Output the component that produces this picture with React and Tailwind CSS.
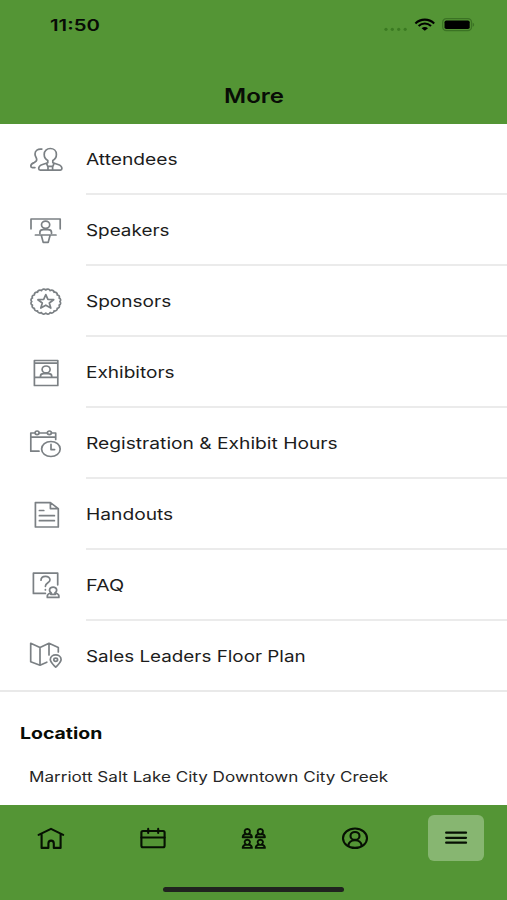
function Icon({ children }) {
  return (
    <svg
      width="40"
      height="36"
      viewBox="0 0 40 36"
      fill="none"
      stroke="#7b8084"
      strokeWidth="1.7"
      strokeLinecap="round"
      strokeLinejoin="round"
      className="mt-px shrink-0"
      aria-hidden="true"
    >
      {children}
    </svg>
  )
}

function AttendeesIcon() {
  return (
    <Icon>
      <path d="M21.8 18.4c-2.1-1.1-3.6-3.4-3.6-6 0-3.6 2.700-5.900 6.100-5.900s6.100 2.300 6.100 5.900c0 2.600-1.500 4.900-3.600 6v2.400l5.200 1.700c2.700.9 3.900 1.900 3.900 4 0 1-.5 1.600-1.500 1.600H14.200c-1 0-1.500-.6-1.500-1.600 0-2.100 1.200-3.100 3.900-4l5.200-1.700z" />
      <path d="M20.600 21.600l1.400 3.200v3M28 21.600l-1.400 3.200v3M22 24.400h4.600" />
      <path d="M15.800 7.200c-4-.6-6.800 1.500-6.800 4.700 0 2.700 1.700 3.600 1.700 5.700 0 1.700-1 2.400-2.600 3-2.300.8-3.300 1.800-3.300 3.500 0 1 .5 1.500 1.500 1.500h2.600" />
    </Icon>
  )
}

function SpeakersIcon() {
  return (
    <Icon>
      <path d="M5 15.800V6h29.200v9.800" />
      <ellipse cx="19.600" cy="11.800" rx="4.100" ry="3.600" />
      <path d="M13.900 20.400v-1.200c0-1.800 1.800-2.500 3.500-2.500h4.600c1.700 0 3.500.7 3.500 2.500v1.200" />
      <path d="M9.400 22H30M15.300 22.200l1.900 7.200h5l1.900-7.200" />
    </Icon>
  )
}

const scallops = Array.from({ length: 20 }, (_, i) => {
  const a = ((i + 1) / 20) * Math.PI * 2
  return `A2.4 2.1 0 0 1 ${(19.8 + 14 * Math.cos(a)).toFixed(2)} ${(17.6 + 11.5 * Math.sin(a)).toFixed(2)}`
}).join('')

function SponsorsIcon() {
  return (
    <Icon>
      <path d={`M33.8 17.6${scallops}Z`} />
      <path d="M19.800 10.600l2.100 4.800 5.800.3-4.400 3.300 1.500 5.100-5-2.900-5 2.900 1.500-5.100-4.400-3.300 5.800-.3z" />
    </Icon>
  )
}

function ExhibitorsIcon() {
  return (
    <Icon>
      <path d="M8.400 5.500h23.400v25H8.400zM8.400 8.200h23.400M8.400 22.300h23.400" />
      <ellipse cx="20.100" cy="14.400" rx="4" ry="3.400" />
      <path d="M14.500 22v-.9c0-1.800 1.400-2.400 3.200-2.400h4.800c1.800 0 3.200.6 3.200 2.400v.9" />
    </Icon>
  )
}

function HoursIcon() {
  return (
    <Icon>
      <path d="M9 7H4.800v18.200H13M13.200 7h8M25.400 7h4.300v6.400M4.800 11.200h24.900" />
      <ellipse cx="11.100" cy="6.800" rx="2" ry="1.800" />
      <ellipse cx="23.400" cy="6.800" rx="2" ry="1.800" />
      <ellipse cx="24.900" cy="23" rx="9.300" ry="7.500" />
      <path d="M25 18.400v5.200h3.600" />
    </Icon>
  )
}

function HandoutsIcon() {
  return (
    <Icon>
      <path d="M9.400 5.600h15l7.900 6v18.400H9.400zM24.400 5.600v6h7.900" />
      <path d="M13.400 13.500h4.400M13.400 18.700h15M13.400 23.700h15" />
    </Icon>
  )
}

function FaqIcon() {
  return (
    <Icon>
      <path d="M19.400 25.400H7.400V5.200h24.300v11.600" />
      <path d="M15 12.200c0-5 9-5 9-.5 0 3.200-4.600 2.900-4.600 6.600M19.400 21.600v.3" />
      <path d="M25.300 25c-3-2.100-2-5.900 1.800-5.900s4.800 3.800 1.800 5.900c1.800.6 4 .7 4 3v1.400H21.300V28c0-2.300 2.200-2.400 4-3zM24.800 26.300h4.600" />
    </Icon>
  )
}

function MapIcon() {
  return (
    <Icon>
      <path d="M20.800 24.200L14 27.200l-9.300-3.500V5.300L14 9.600l9-4.300 9.300 4.300v4.400M14 9.600v17.600M23 5.300V17" />
      <path d="M29.700 29.200c-2.400-2.500-5.400-4.800-5.400-7.600 0-6.200 10.800-6.200 10.800 0 0 2.800-3 5.100-5.400 7.600z" />
      <ellipse cx="29.700" cy="21.700" rx="1.900" ry="1.600" />
    </Icon>
  )
}

const items = [
  { label: 'Attendees', icon: AttendeesIcon, stretch: 'scale-x-[1.2]' },
  { label: 'Speakers', icon: SpeakersIcon, stretch: 'scale-x-[1.18]' },
  { label: 'Sponsors', icon: SponsorsIcon, stretch: 'scale-x-[1.19]' },
  { label: 'Exhibitors', icon: ExhibitorsIcon, stretch: 'scale-x-[1.19]' },
  { label: 'Registration & Exhibit Hours', icon: HoursIcon, stretch: 'scale-x-[1.2]' },
  { label: 'Handouts', icon: HandoutsIcon, stretch: 'scale-x-[1.2]' },
  { label: 'FAQ', icon: FaqIcon, stretch: 'scale-x-[1.24]' },
  { label: 'Sales Leaders Floor Plan', icon: MapIcon, stretch: 'scale-x-[1.177]' },
]

function StatusBar() {
  return (
    <div className="flex h-[49px] items-center justify-between pl-[50px] pr-[32px]">
      <span className="origin-left scale-x-[1.27] text-[16px] font-semibold leading-none">11:50</span>
      <svg width="92" height="16" viewBox="0 0 92 16" aria-hidden="true">
        <g fill="#3b7a22">
          <circle cx="3" cy="12.300" r="1.600" />
          <circle cx="9.300" cy="12.300" r="1.600" />
          <circle cx="15.700" cy="12.300" r="1.600" />
          <circle cx="22.200" cy="12.300" r="1.600" />
        </g>
        <g fill="none" stroke="#000" strokeWidth="2.100">
          <path d="M32.400 6.400C37.600 1.300 46 1.300 51.200 6.400" />
          <path d="M35.600 9C39.200 5.700 44.400 5.700 48 9" />
        </g>
        <path d="M41.800 13.800l-3.200-2.600c1.800-1.500 4.600-1.500 6.400 0z" />
        <rect x="59.700" y="1.700" width="28.800" height="12" rx="3.600" fill="none" stroke="#3b7324" strokeWidth="1.300" />
        <rect x="61.500" y="3.500" width="25.200" height="8.500" rx="1.800" />
        <path d="M89.700 5.700c2 .8 2 3.200 0 4z" fill="#3b7324" />
      </svg>
    </div>
  )
}

function MenuRow({ label, icon: RowIcon, stretch, last }) {
  return (
    <li className={last ? 'flex items-stretch border-b-2 border-[#e9e9e9] pl-[26px]' : 'flex items-stretch pl-[26px]'}>
      <div className="flex w-[60px] items-center">
        <RowIcon />
      </div>
      <div className={last ? 'flex flex-1 items-center' : 'flex flex-1 items-center border-b-2 border-[#ebebeb]'}>
        <span className={`origin-left whitespace-nowrap pt-px text-[16px] leading-none text-[#1c1c1c] ${stretch}`}>{label}</span>
      </div>
    </li>
  )
}

function NavIcon({ children }) {
  return (
    <svg
      width="30"
      height="26"
      viewBox="0 0 30 26"
      fill="none"
      stroke="#061003"
      strokeWidth="2.100"
      strokeLinecap="round"
      strokeLinejoin="round"
      aria-hidden="true"
    >
      {children}
    </svg>
  )
}

const person = 'M3.900 5.700C1.700 4.300 2.400 1 5.300 1S8.900 4.300 6.700 5.700C8.300 6.300 9.900 6.900 9.900 9.200H.7C.7 6.900 2.300 6.300 3.900 5.700zM3.900 6.200H6.700'

function NavBar() {
  return (
    <nav className="flex h-[95px] flex-col bg-[#549535]">
      <div className="grid h-[66px] grid-cols-5 place-items-center">
        <NavIcon>
          <path d="M2.600 9.900L15 3.900l12.200 6M5.600 9.200v13.700h6.800v-4.500c0-3.700 5.400-3.700 5.400 0v4.500h6.800V9.200" />
        </NavIcon>
        <NavIcon>
          <rect x="4.400" y="6" width="23.200" height="16.300" rx="1.500" />
          <path d="M4.400 12.500h23.200M11.200 3.900v4M21.200 3.900v4" />
        </NavIcon>
        <NavIcon>
          <g strokeWidth="1.900">
            <path d={person} transform="translate(4 3)" />
            <path d={person} transform="translate(17 3)" />
            <path d={person} transform="translate(4 13.700)" />
            <path d={person} transform="translate(17 13.700)" />
          </g>
        </NavIcon>
        <NavIcon>
          <ellipse cx="15" cy="13.200" rx="12" ry="9.700" />
          <ellipse cx="15" cy="10.900" rx="4.500" ry="3.900" />
          <path d="M8.300 20.900c.4-7.600 13-7.600 13.400 0" />
        </NavIcon>
        <div className="flex h-[46px] w-[56px] items-center justify-center rounded-md bg-[#87b671]">
          <NavIcon>
            <path d="M5.200 7.700h19.800M5.200 12.800h19.800M5.200 17.700h19.800" strokeWidth="2.300" />
          </NavIcon>
        </div>
      </div>
      <div className="mx-auto mt-[16px] h-[5px] w-[181px] rounded-full bg-[#20231f]" />
    </nav>
  )
}

export default function App() {
  return (
    <div className="flex h-[900px] w-full flex-col overflow-hidden bg-white font-['Inter',sans-serif] text-[#080c06]">
      <header className="h-[124px] bg-[#549535]">
        <StatusBar />
        <h1 className="mt-[34px] text-center text-[20px] font-semibold leading-[24px]">
          <span className="inline-block translate-y-[0.5px] scale-x-[1.2]">More</span>
        </h1>
      </header>
      <main className="flex-1">
        <ul className="grid h-[567.5px] grid-rows-8">
          {items.map((item, i) => (
            <MenuRow key={item.label} {...item} last={i === items.length - 1} />
          ))}
        </ul>
        <section className="pt-[31px]">
          <h2 className="ml-[20px] w-fit origin-left scale-x-[1.215] text-[16px] font-bold leading-[20px]">Location</h2>
          <p className="ml-[29px] mt-[24px] w-fit origin-left scale-x-[1.22] whitespace-nowrap text-[14px] leading-[20px] text-[#262626]">
            Marriott Salt Lake City Downtown City Creek
          </p>
        </section>
      </main>
      <NavBar />
    </div>
  )
}
